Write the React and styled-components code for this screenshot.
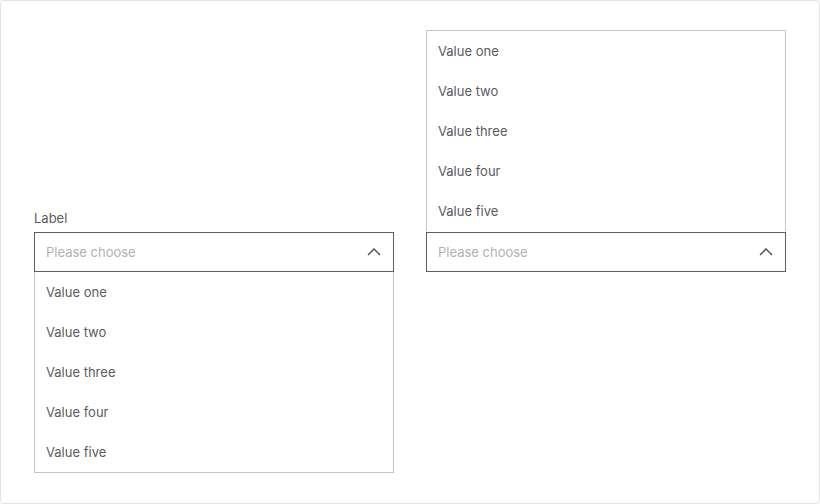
import React from "react";
import styled, { createGlobalStyle } from "styled-components";

const GlobalStyle = createGlobalStyle`
  * {
    box-sizing: border-box;
  }

  body {
    margin: 0;
    background: #ffffff;
    font-family: "Inter", "Liberation Sans", sans-serif;
  }
`;

const Frame = styled.div`
  width: 820px;
  height: 504px;
  border: 1px solid #e3e3e3;
  border-radius: 4px;
  padding: 29px 33px 0 33px;
  display: grid;
  grid-template-columns: 360px 360px;
  grid-template-rows: 202px 40px auto;
  column-gap: 32px;
`;

const Field = styled.div`
  display: grid;
  grid-row: 1 / 4;
  grid-template-rows: subgrid;
`;

const Above = styled.div`
  align-self: end;
`;

const Label = styled.label`
  display: block;
  font-size: 13px;
  line-height: 16px;
  color: #5a5a5a;
  margin-bottom: 6px;
`;

const Trigger = styled.button`
  grid-row: 2;
  display: flex;
  align-items: center;
  justify-content: space-between;
  width: 100%;
  height: 40px;
  padding: 0 12px 0 11px;
  background: #ffffff;
  border: 1px solid #5f5f5f;
  font-family: inherit;
  font-size: 13px;
  color: #b2b2b2;
  cursor: pointer;
`;

const Menu = styled.ul`
  list-style: none;
  margin: 0;
  padding: 0;
  border: 1px solid #c6c6c6;
  ${(props) =>
    props.$up
      ? "border-bottom: none; margin-bottom: 1px;"
      : "border-top: none;"}
`;

const Option = styled.li`
  height: 40px;
  display: flex;
  align-items: center;
  padding-left: 11px;
  font-size: 13px;
  color: #5c5c5c;
`;

const Chevron = () => (
  <svg width="14" height="8" viewBox="0 0 14 8" fill="none">
    <path d="M1 7L7 1L13 7" stroke="#4a4a4a" strokeWidth="1.3" />
  </svg>
);

const values = ["Value one", "Value two", "Value three", "Value four", "Value five"];

function OptionList({ up }) {
  return (
    <Menu $up={up}>
      {values.map((v) => (
        <Option key={v}>{v}</Option>
      ))}
    </Menu>
  );
}

function Select({ label, up }) {
  return (
    <Field>
      <Above>
        {label && <Label>{label}</Label>}
        {up && <OptionList up />}
      </Above>
      <Trigger>
        <span>Please choose</span>
        <Chevron />
      </Trigger>
      <div>{!up && <OptionList />}</div>
    </Field>
  );
}

export default function App() {
  return (
    <>
      <GlobalStyle />
      <Frame>
        <Select label="Label" />
        <Select up />
      </Frame>
    </>
  );
}
